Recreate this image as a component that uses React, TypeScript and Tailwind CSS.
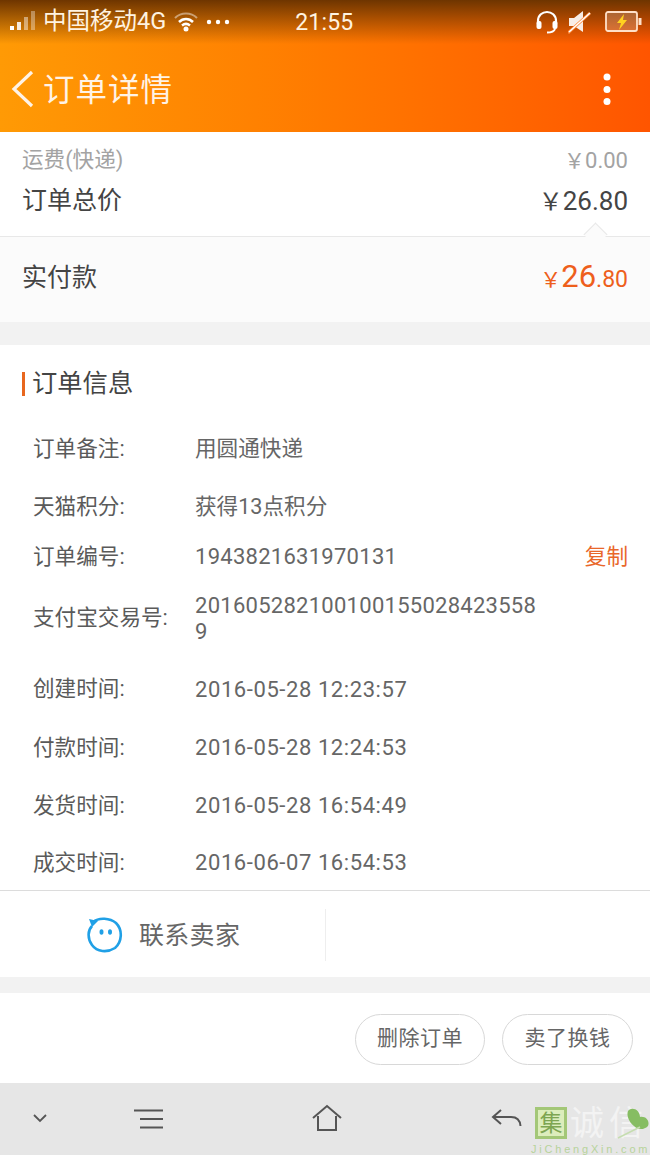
const sans = "font-['Roboto','Noto_Sans_CJK_SC',sans-serif]";

function Row({ label, value, cls, valueCls, right }: { label: string; value: React.ReactNode; cls: string; valueCls: string; right?: React.ReactNode }) {
  return (
    <div className={`flex items-center pl-[33px] pr-[22px] ${cls}`}>
      <div className="w-[162px] text-[21.600px] text-[#5a5a5a] shrink-0">{label}</div>
      <div className={`flex-1 text-[#666] ${valueCls}`}>{value}</div>
      {right}
    </div>
  );
}

export default function App() {
  const date = "text-[22px] leading-[26px] tracking-[0.58px]";
  const num = "text-[22px] leading-[26px] tracking-[0.27px]";
  const cjk = "text-[21.600px] leading-[26px]";
  return (
    <div className={`w-[650px] h-[1155px] flex flex-col overflow-hidden bg-white ${sans}`}>
      {/* header */}
      <div className="relative h-[132px] shrink-0 bg-gradient-to-r from-[#ff9a05] via-[#ff7a00] to-[#ff5500]">
        <div className="absolute inset-x-0 top-0 h-[44px] bg-gradient-to-b from-[#6e3500] to-transparent" />
        <div className="relative h-[44px] flex items-center text-white">
          <svg width="32" height="26" viewBox="0 0 32 26" className="ml-[9px] mt-[-2px]">
            <rect x="1" y="18" width="4" height="4" fill="#fff" />
            <rect x="8" y="14" width="4" height="8" fill="#fff" fillOpacity="0.85" />
            <rect x="15" y="9" width="4" height="13" fill="#fff" fillOpacity="0.45" />
            <rect x="22" y="3" width="4" height="19" fill="#fff" fillOpacity="0.35" />
          </svg>
          <span className="ml-[2px] text-[23.500px] leading-none mt-[-1px] text-[#fff3e0] whitespace-nowrap">中国移动4G</span>
          <svg width="26" height="22" viewBox="0 0 26 22" className="ml-[7px] shrink-0" fill="none" stroke="#fff">
            <path d="M2 7C8 1 18 1 24 7" strokeWidth="2" strokeOpacity="0.45" />
            <path d="M6 11C10 7 16 7 20 11" strokeWidth="2.500" />
            <path d="M9 14.500C11.500 12.500 14.500 12.500 17 14.500" strokeWidth="2.500" />
            <circle cx="13" cy="18" r="2.500" fill="#fff" stroke="none" />
          </svg>
          <svg width="24" height="6" viewBox="0 0 24 6" className="ml-[7px] shrink-0" fill="#fff">
            <circle cx="3" cy="3" r="2.200" />
            <circle cx="12" cy="3" r="2.200" />
            <circle cx="21" cy="3" r="2.200" />
          </svg>
          <span className="ml-[65px] text-[23px] leading-none text-[#fff3e0] tracking-[0.2px]">21:55</span>
          <svg width="24" height="24" viewBox="0 0 24 24" className="ml-[181px] shrink-0" fill="none" stroke="#fff">
            <path d="M3 14V11C3 -1 21 -1 21 11V14" strokeWidth="2.200" />
            <rect x="1.500" y="11" width="5" height="8" rx="2" fill="#fff" stroke="none" />
            <rect x="17.500" y="11" width="5" height="8" rx="2" fill="#fff" stroke="none" />
            <path d="M20 19C19 22 16 22.500 12 22.500" strokeWidth="2" />
          </svg>
          <svg width="24" height="24" viewBox="0 0 24 24" className="ml-[9px] shrink-0" fill="none">
            <path d="M1 8H6L15 1V22L6 16H1Z" fill="#fff" fillOpacity="0.9" />
            <path d="M0 23L22 3" stroke="#ff8a3a" strokeWidth="3" />
            <path d="M1 22L22 3" stroke="#fff" strokeWidth="1.500" />
          </svg>
          <svg width="37" height="22" viewBox="0 0 37 22" className="ml-[13px] shrink-0" fill="none">
            <rect x="1" y="1" width="31" height="19" rx="2" stroke="#ffe0c8" strokeWidth="1.800" fill="#ffffff" fillOpacity="0.2" />
            <rect x="33.500" y="7" width="3" height="7" fill="#ffe0c8" />
            <path d="M19 3L12 12H16L14 19L22 9H18Z" fill="#ffd21f" />
          </svg>
        </div>
        <div className="relative h-[88px] flex items-center">
          <svg width="24" height="38" viewBox="0 0 24 38" fill="none" className="ml-[11px] mt-[1px]" stroke="#fff3e6" strokeWidth="3.200">
            <path d="M21 2L3 19L21 36" />
          </svg>
          <span className="ml-[8px] mt-[6px] text-[31.500px] tracking-[1px] leading-none text-[#fff3e6]">订单详情</span>
          <svg width="8" height="34" viewBox="0 0 8 34" fill="#fff" className="ml-auto mr-[39px] mt-[3px]">
            <circle cx="4" cy="4" r="3.500" />
            <circle cx="4" cy="16.500" r="3.500" />
            <circle cx="4" cy="28.500" r="3.500" />
          </svg>
        </div>
      </div>

      {/* prices */}
      <div className="h-[105px] shrink-0 px-[22px] relative border-b border-[#e8e8e8]">
        <div className="h-[54px] flex justify-between items-center text-[21.600px] text-[#a3a3a3] pt-[3px]">
          <span>运费(快递)</span>
          <span className="text-[22px]"><span className="text-[21px]">￥</span>0.00</span>
        </div>
        <div className="h-[30px] flex justify-between items-center text-[#444]">
          <span className="text-[25px]">订单总价</span>
          <span className="text-[26px]"><span className="text-[24px]">￥</span>26.80</span>
        </div>
        <div className="absolute right-[46px] -bottom-[7px] w-[17px] h-[17px] rotate-45 bg-[#fbfbfb] border-l border-t border-[#e8e8e8]" />
      </div>
      <div className="h-[85px] shrink-0 bg-[#fbfbfb] px-[22px] pb-[4px] flex items-center justify-between">
        <span className="text-[25px] text-[#444]">实付款</span>
        <span className="text-[#ee5f1c] flex items-baseline">
          <span className="text-[21px]">￥</span>
          <span className="text-[31px]">26</span>
          <span className="text-[23px]">.80</span>
        </span>
      </div>
      <div className="h-[23px] shrink-0 bg-[#f2f2f2]" />

      {/* info */}
      <div className="h-[78px] shrink-0 flex items-center pl-[22px]">
        <span className="w-[3px] h-[24px] bg-[#e8671e]" />
        <span className="ml-[7px] text-[25.300px] text-[#444]">订单信息</span>
      </div>
      <Row label="订单备注:" value="用圆通快递" valueCls={cjk} cls="h-[52px]" />
      <Row label="天猫积分:" value="获得13点积分" valueCls={cjk} cls="h-[64px]" />
      <Row
        label="订单编号:"
        value="1943821631970131"
        valueCls={num}
        cls="h-[36px]"
        right={<span className="text-[21.600px] text-[#e9672a]">复制</span>}
      />
      <Row
        label="支付宝交易号:"
        value={<>201605282100100155028423558<br />9</>}
        valueCls={num}
        cls="h-[87px]"
      />
      <Row label="创建时间:" value="2016-05-28 12:23:57" valueCls={date} cls="h-[55px]" />
      <Row label="付款时间:" value="2016-05-28 12:24:53" valueCls={date} cls="h-[62px]" />
      <Row label="发货时间:" value="2016-05-28 16:54:49" valueCls={date} cls="h-[54px]" />
      <Row label="成交时间:" value="2016-06-07 16:54:53" valueCls={date} cls="h-[57px] pt-[3px]" />

      {/* contact */}
      <div className="h-[87px] shrink-0 border-t border-[#dcdcdc] flex items-center">
        <div className="w-[326px] h-[52px] mt-[1px] border-r border-[#eeeeee] flex items-center pl-[87px]">
          <svg width="36" height="36" viewBox="0 0 36 36" fill="none">
            <path d="M6 5C12 0 23 1 29 6C36 13 35 25 28 31C20 36 10 35 5 28C0 21 1 13 5 9" stroke="#20a0e6" strokeWidth="2.600" />
            <path d="M2 2L11 4L5 10Z" fill="#20a0e6" />
            <ellipse cx="14.500" cy="15" rx="2" ry="2.800" fill="#20a0e6" />
            <ellipse cx="23" cy="15" rx="2" ry="2.800" fill="#20a0e6" />
          </svg>
          <span className="ml-[16px] mt-[2px] text-[25px] text-[#666] tracking-[0.3px]">联系卖家</span>
        </div>
      </div>
      <div className="h-[16px] shrink-0 bg-[#f2f2f2]" />

      {/* actions */}
      <div className="h-[90px] shrink-0 flex items-center justify-end gap-[17px] pr-[17px]">
        <button className="w-[130px] h-[51px] rounded-full border border-[#d8d8d8] text-[21px] text-[#666] tracking-[0.5px] mt-[2px]">删除订单</button>
        <button className="w-[131px] h-[51px] rounded-full border border-[#d8d8d8] text-[21px] text-[#666] tracking-[0.5px] mt-[2px]">卖了换钱</button>
      </div>

      {/* nav */}
      <div className="relative flex-1 bg-[#e6e6e6]">
        <svg width="14" height="9" viewBox="0 0 14 9" fill="none" stroke="#555" strokeWidth="1.800" className="absolute left-[33px] top-[31px]">
          <path d="M1 1L7 7L13 1" />
        </svg>
        <svg width="30" height="20" viewBox="0 0 30 20" fill="none" stroke="#555" strokeWidth="2.200" className="absolute left-[134px] top-[26px]">
          <path d="M0 1.500H29M6 10H29M6 18.500H29" />
        </svg>
        <svg width="30" height="28" viewBox="0 0 30 28" fill="none" stroke="#555" strokeWidth="2" className="absolute left-[312px] top-[21px]">
          <path d="M1 14L15 2L29 14M6 12V26H24V12" />
        </svg>
        <svg width="32" height="20" viewBox="0 0 32 20" fill="none" stroke="#555" strokeWidth="2" className="absolute left-[491px] top-[26px]">
          <path d="M10 1L2 8L10 15M2 8H20C26 8 29 11 29.500 17" />
        </svg>
        <div className="absolute left-[535px] top-[24px] w-[32px] h-[32px] bg-[#dcedbc] border-[3px] border-[#a3c777] flex items-center justify-center text-[23px] leading-none text-[#7da552]">集</div>
        <div className="absolute left-[570px] top-[24px] text-[34px] leading-[34px] text-[#f3f3f3] whitespace-nowrap tracking-[5px] font-['Liberation_Serif','Noto_Sans_CJK_SC',serif]">诚信</div>
        <svg width="34" height="32" viewBox="0 0 34 32" className="absolute left-[616px] top-[24px]" fill="none">
          <path d="M12 4C16 -1 24 3 24 10C30 9 34 14 32 19C27 24 21 22 18 19C14 16 10 9 12 4Z" fill="#86bd62" />
          <path d="M24 20L2 31" stroke="#c6ddb0" strokeWidth="1.500" />
        </svg>
        <div className="absolute left-[531px] top-[61px] text-[11px] leading-[11px] tracking-[2.800px] text-[#b7d39b] font-['Liberation_Sans',sans-serif] whitespace-nowrap">JiChengXin.com</div>
      </div>
    </div>
  );
}
